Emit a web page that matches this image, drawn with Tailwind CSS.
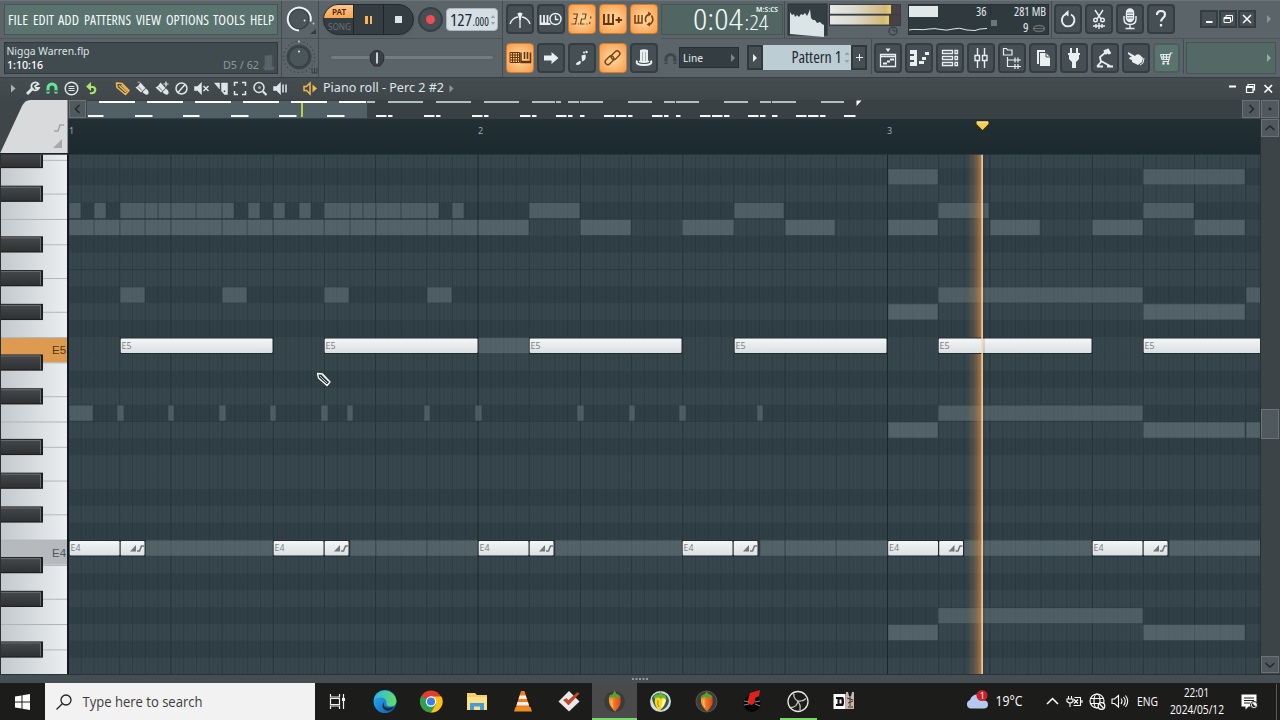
<!DOCTYPE html>
<html lang="en">

<head>
    <meta charset="utf-8" />
    <title>Piano roll - Perc 2 #2</title>
    <script src="https://cdn.jsdelivr.net/npm/@tailwindcss/browser@4"></script>
</head>

<body class="w-[1280px] h-[720px] overflow-hidden flex flex-col bg-[#42494c] font-['Noto_Sans',sans-serif] text-[#e4ecee]">

    <!-- main toolbar -->
    <header class="h-[78px] flex bg-[#5b6569] border-t border-b border-t-[#6b7478] border-b-[#353e42] shrink-0">
        <!-- menu + hint panel -->
        <div class="w-[282px] border-r border-[#434d51] flex flex-col">
            <div class="h-[38px] pl-1 pt-[3px] border-b border-[#4b5559]">
                <nav class="w-[274px] h-[31px] bg-[#5a736f] border border-[#455652]">
                    <svg class="w-[272px] h-[29px] font-['Open_Sans',sans-serif] [font-stretch:75%]" font-size="14" font-weight="500" fill="#f2faf8">
                        <text x="3" y="19.500" textLength="20" lengthAdjust="spacingAndGlyphs">FILE</text>
                        <text x="28" y="19.500" textLength="21" lengthAdjust="spacingAndGlyphs">EDIT</text>
                        <text x="53" y="19.500" textLength="21" lengthAdjust="spacingAndGlyphs">ADD</text>
                        <text x="79" y="19.500" textLength="47" lengthAdjust="spacingAndGlyphs">PATTERNS</text>
                        <text x="131" y="19.500" textLength="25" lengthAdjust="spacingAndGlyphs">VIEW</text>
                        <text x="161" y="19.500" textLength="43" lengthAdjust="spacingAndGlyphs">OPTIONS</text>
                        <text x="208" y="19.500" textLength="32" lengthAdjust="spacingAndGlyphs">TOOLS</text>
                        <text x="245" y="19.500" textLength="24" lengthAdjust="spacingAndGlyphs">HELP</text>
                    </svg>
                </nav>
            </div>
            <div class="pl-1 pt-[3px]">
                <div class="w-[274px] h-[32px] bg-[#404b4f] border border-[#2f393d]">
                    <svg class="w-[272px] h-[30px]" font-size="11" fill="#dde3e5">
                        <text x="1.500" y="11.500" textLength="83" lengthAdjust="spacingAndGlyphs">Nigga Warren.flp</text>
                        <text x="2" y="25.500" textLength="36" lengthAdjust="spacingAndGlyphs" font-weight="500" fill="#fff">1:10:16</text>
                        <text x="218" y="25.500" textLength="36" lengthAdjust="spacingAndGlyphs" fill="#8d979b">D5 / 62</text>
                        <path d="M260 13l7-1v12h3l-2 3h-8l-2-3h2zM262 14v11M265 14v11" fill="#5c686d" stroke="#505c61" />
                    </svg>
                </div>
            </div>
        </div>

        <!-- main volume and pitch knobs -->
        <div class="w-[37px] border-r border-[#434d51]">
            <svg class="w-9 h-[76px]">
                <path d="M0 37.500H36" stroke="#4b5559" />
                <circle cx="17" cy="18" r="10" fill="#4b565b" stroke="#39444a" stroke-width="1.500" />
                <path d="M17 29.500a11.500 11.500 0 1 1 11.500-9" fill="none" stroke="#eef3f4" stroke-width="2" />
                <circle cx="22.500" cy="19.500" r=".9" fill="#e7eef0" /><circle cx="31.500" cy="22.500" r=".9" fill="#c3cbce" />
                <path d="M34 28v5h-6z" fill="#333c40" />
                <circle cx="17" cy="56" r="15.500" fill="none" stroke="#39444a" stroke-width="1.500" stroke-dasharray="1 3.060" />
                <circle cx="17" cy="56" r="12.500" fill="#3b464b" />
                <circle cx="17" cy="56" r="10" fill="#4b565b" stroke="#333e43" />
                <circle cx="17" cy="50.500" r="1" fill="#e7eef0" /><circle cx="17" cy="40.500" r="1" fill="#c3cbce" />
                <path d="M30 67v5h5v-5M32.500 67v5" fill="none" stroke="#333c40" />
            </svg>
        </div>

        <!-- transport -->
        <div class="w-[184px] border-r border-[#434d51] flex flex-col">
            <div class="h-[38px] flex items-center pl-1 border-b border-[#4b5559]">
                <div class="w-[91px] h-[31px] rounded-full bg-[#343d42] border border-[#232b2f] flex overflow-hidden shadow-sm">
                    <div class="w-[30px] flex flex-col border-r border-[#1d2529]">
                        <div class="h-[13px] bg-gradient-to-b from-[#ffc58a] to-[#f9a452]">
                            <svg class="w-[30px] h-[13px]"><text x="8" y="10" font-size="9" textLength="14" lengthAdjust="spacingAndGlyphs" font-weight="600" fill="#3d2405">PAT</text></svg>
                        </div>
                        <div class="h-[16px]">
                            <svg class="w-[30px] h-4"><text x="4" y="11.500" font-size="9" textLength="23" lengthAdjust="spacingAndGlyphs" fill="#697175">SONG</text></svg>
                        </div>
                    </div>
                    <div class="w-[30px] flex items-center justify-center gap-[2px] border-r border-[#1d2529]">
                        <i class="w-[2.5px] h-[8px] bg-[#fdb25c]"></i><i class="w-[2.5px] h-[8px] bg-[#fdb25c]"></i>
                    </div>
                    <div class="w-[28px] flex items-center justify-center"><i class="w-[7px] h-[7px] bg-[#dbe4e7]"></i></div>
                </div>
                <div class="ml-1 w-[25px] h-[25px] rounded-full bg-[#454f54] border-2 border-[#363f43] flex items-center justify-center">
                    <i class="w-[9px] h-[9px] rounded-full bg-[#ef4d55]"></i>
                </div>
                <div class="ml-[3px] w-[52px] h-[23px] rounded bg-[#d3dfe4] border border-[#aab7bc]">
                    <svg class="w-[50px] h-[21px] font-['Open_Sans',sans-serif] [font-stretch:75%]" fill="#1e2a30">
                        <text x="3" y="16.500" font-size="17" textLength="22" lengthAdjust="spacingAndGlyphs">127</text>
                        <text x="25.500" y="16.500" font-size="12" textLength="16.500" lengthAdjust="spacingAndGlyphs">.000</text>
                        <path d="M44 9l2-3 2 3zM44 13l2 3 2-3z" fill="#93a2a9" />
                    </svg>
                </div>
            </div>
            <svg class="w-[182px] h-[37px]">
                <rect x="12" y="16.500" width="162" height="4" fill="#727d81" stroke="#4e585c" stroke-width=".6" />
                <path d="M51 18.500a7 7 0 0 1 14 0q0 5-4 8.500h-6q-4-3.500-4-8.500z" fill="#39424a" stroke="#262e34" />
                <path d="M52.500 20a5.500 5.500 0 0 0 11 0l-3 6h-5z" fill="#59393a" />
                <path d="M58 13.500v11" stroke="#f4f6f7" stroke-width="1.600" />
            </svg>
        </div>

        <!-- recording options -->
        <div class="w-[158px] pl-[3px] pt-[3px] grid grid-cols-[28px_28px_28px_28px_28px] grid-rows-[31px_31px] gap-y-[8px] gap-x-[3px] content-start justify-start">
            <div class="w-[28px] h-[30px] bg-[#454f54] border-2 border-[#343e42] rounded-sm"><svg viewBox="0 0 24 26" class="w-6 h-[26px]" fill="none" stroke="#eaf0f2" stroke-width="1.300"><path d="M2 18q2-6 8-7M22 18q-2-6-8-7M12 10v12" /><path d="M9.500 7.500q2.500-2 5 0l-2 6.500h-1z" fill="#eaf0f2" stroke="none" /></svg></div>
            <div class="w-[28px] h-[30px] bg-[#454f54] border-2 border-[#343e42] rounded-sm"><svg viewBox="0 0 24 26" class="w-6 h-[26px]" fill="none" stroke="#eaf0f2" stroke-width="1.400"><path d="M1.500 9v9h10M5 9v9M8.500 9v9M1.500 17.500h8" stroke-width="1.800" /><circle cx="16.500" cy="13" r="5.500" fill="#454f54" /><path d="M16.500 9.500v4h3" /></svg></div>
            <div class="w-[28px] h-[30px] bg-[radial-gradient(circle,#ffdda8,#f89a45)] border border-[#d87a28] rounded-sm"><svg viewBox="0 0 26 28" class="w-[26px] h-7" fill="none" stroke="#7a4212" stroke-width="1.200"><path d="M4 9h4.500l-1 4.500H4.500M7.500 13.500l-1 5.500H2.500M9.500 18.500v1M13 9h4l-1 5h-3.500l-1 5h4M18 18.500v1M22 11.500l-.5 2M21 17l-.5 2" /></svg></div>
            <div class="w-[28px] h-[30px] bg-[radial-gradient(circle,#ffdda8,#f89a45)] border border-[#d87a28] rounded-sm"><svg viewBox="0 0 26 28" class="w-[26px] h-7" fill="none" stroke="#673409" stroke-width="1.900"><path d="M4 9v10h9V9M8.500 9v9M15.500 15h6.500M18.800 12v6" /></svg></div>
            <div class="w-[28px] h-[30px] bg-[radial-gradient(circle,#ffdda8,#f89a45)] border border-[#d87a28] rounded-sm"><svg viewBox="0 0 26 28" class="w-[26px] h-7" fill="none" stroke="#7a4212" stroke-width="1.600"><path d="M4 10v8h7v-8M7.500 10v8M15 17q-2-5 2.500-7.500l1.500-.5M20.500 10.500q3 4.500-.5 8l-2 1" /><path d="M17 6.500l3.500 2.500-3 2.500zM19 17l-3.500 2.500 3.500 2z" fill="#7a4212" stroke="none" /></svg></div>

            <div class="w-[28px] h-[30px] bg-[radial-gradient(circle,#ffdda8,#f89a45)] border border-[#d87a28] rounded-sm"><svg viewBox="0 0 26 28" class="w-[26px] h-7" fill="none" stroke="#673409"><path d="M3 8.500h9.500v10H3zM3 11h9M3 13.500h9M3 16h9M5.500 9v10M8 9v10M10.500 9v10" /><path d="M14 8.500v10h9.500v-10M17.500 8v7M20.500 8v7M14 17.500h9" stroke-width="1.600" /></svg></div>
            <div class="w-[28px] h-[30px] bg-[#454f54] border-2 border-[#343e42] rounded-sm"><svg viewBox="0 0 24 26" class="w-6 h-[26px]" fill="#eaf0f2"><path d="M5 10.500h7.500V7l7 6-7 6v-3.500H5z" /></svg></div>
            <div class="w-[28px] h-[30px] bg-[#454f54] border-2 border-[#343e42] rounded-sm"><svg viewBox="0 0 24 26" class="w-6 h-[26px]" fill="#eaf0f2"><path d="M11.500 10.500l4-1q1 4-1.500 6l-2 1zM11 17q-.5 3-4 3-2-1 0-2.500 2-1 3-2z" /><circle cx="14" cy="7.500" r="1" /><circle cx="16.500" cy="7" r="1.200" /></svg></div>
            <div class="w-[28px] h-[30px] bg-[radial-gradient(circle,#ffdda8,#f89a45)] border border-[#d87a28] rounded-sm"><svg viewBox="0 0 26 28" class="w-[26px] h-7" fill="none" stroke="#7a4212" stroke-width="1.400"><rect x="4.500" y="13.500" width="10" height="5.500" rx="2.700" transform="rotate(-45 9.500 16.250)" /><rect x="10.500" y="8.500" width="10" height="5.500" rx="2.700" transform="rotate(-45 15.500 11.250)" /></svg></div>
            <div class="w-[28px] h-[30px] bg-[#454f54] border-2 border-[#343e42] rounded-sm"><svg viewBox="0 0 24 26" class="w-6 h-[26px]" fill="#eaf0f2"><path d="M8 5q4-1.500 8 0v10l1.500 2q-5.500 2-11 0L8 15z" /><path d="M5 15.500q-2 4.500 7 4.500t7-4.500" fill="none" stroke="#eaf0f2" stroke-width="1.800" /><path d="M10.500 7v9M13.500 7v9" stroke="#9aa5a9" stroke-width=".8" /></svg></div>
        </div>

        <!-- time, snap, pattern selector and meters -->
        <div class="w-[244px] flex flex-col">
            <div class="h-[38px] border-b border-[#4b5559] flex">
                <div class="w-[124px] pt-[3px] border-r border-[#434d51]">
                    <div class="w-[122px] h-[31px] bg-[#516662] border border-[#455652]">
                        <svg class="w-[120px] h-[29px] font-['Open_Sans',sans-serif] [font-stretch:75%]" fill="#f0f8f6">
                            <text x="31" y="25" font-size="29" font-weight="300" textLength="50" lengthAdjust="spacingAndGlyphs">0:04</text>
                            <text x="82.500" y="25" font-size="20" font-weight="300" textLength="24" lengthAdjust="spacingAndGlyphs">:24</text>
                            <text x="94" y="7" font-size="7" font-weight="600" textLength="22" lengthAdjust="spacingAndGlyphs">M:S:CS</text>
                        </svg>
                    </div>
                </div>
                <svg class="w-[120px] h-[37px]">
                    <rect x="3" y="3" width="39" height="31" fill="#343e43" stroke="#2a3337" />
                    <path d="M5 33V11l2 3 2-1 1 3 2-2 2 2 2-3 2 1 2-2 2 3 2-4 1-3 1 9 2 2 2 0 2 3 3-1 2 2 2 1v12z" fill="#dbe4e7" />
                    <defs><linearGradient id="vu"><stop offset="0" stop-color="#e3e7e8" /><stop offset=".4" stop-color="#dcdacf" /><stop offset=".9" stop-color="#d3b878" /><stop offset="1" stop-color="#e5cf6d" /></linearGradient></defs>
                    <rect x="44.500" y="3.500" width="71" height="21" fill="#4a4143" stroke="#343e43" />
                    <rect x="45" y="4" width="61" height="9" fill="url(#vu)" /><rect x="45" y="14.500" width="59" height="9" fill="url(#vu)" />
                    <path d="M45 13.500h70" stroke="#343e43" stroke-width="1.500" />
                    <circle cx="108" cy="30" r="4" fill="none" stroke="#394449" stroke-width="1.500" /><path d="M108 27v3h3" stroke="#394449" fill="none" />
                </svg>
            </div>
            <div class="h-[37px] flex items-center">
                <svg class="w-[18px] h-9"><path d="M5 24v-5a4.500 4.500 0 0 1 9 0v5" fill="none" stroke="#3d474b" stroke-width="3" /><path d="M3.500 22h3M12.500 22h3" stroke="#59636a" /></svg>
                <div class="w-[60px] h-[21px] bg-[#343e42] border border-[#262f33] flex items-center justify-between px-[3px]">
                    <svg class="w-6 h-4"><text x="0" y="12" font-size="11.500" fill="#e4ecee" textLength="20" lengthAdjust="spacingAndGlyphs">Line</text></svg>
                    <svg class="w-1 h-2" fill="#7b868a"><path d="M0 0l4 4-4 4z" /></svg>
                </div>
                <div class="ml-2 w-4 h-[25px] bg-[#454f54] border-2 border-[#2f383c] flex items-center justify-center"><svg class="w-[5px] h-2" fill="#eaf0f2"><path d="M0 0l4 4-4 4z" /></svg></div>
                <div class="w-[88px] h-[25px] bg-[#bdcdd4]">
                    <svg class="w-[88px] h-[25px] font-['Open_Sans',sans-serif] [font-stretch:75%]"><text x="28.500" y="18" font-size="16" fill="#1d2a31" textLength="50" lengthAdjust="spacingAndGlyphs">Pattern 1</text><path d="M81.500 10l2.500-3 2.500 3zM81.500 15l2.500 3 2.500-3z" fill="#93a2a9" /></svg>
                </div>
                <div class="w-4 h-[25px] bg-[#454f54] border-2 border-[#2f383c] flex items-center justify-center"><svg class="w-[7px] h-[7px]" stroke="#eaf0f2"><path d="M3.500 0v7M0 3.500h7" /></svg></div>
            </div>
        </div>

        <!-- cpu panel and window shortcuts -->
        <div class="flex-1 flex flex-col">
            <div class="h-[38px] border-b border-[#4b5559] flex">
                <svg class="w-[147px] h-[37px] border-r border-[#434d51] font-['Open_Sans',sans-serif] [font-stretch:75%]" fill="#e4ecee" font-size="12">
                    <rect x="3.500" y="3.500" width="140" height="30" fill="#2f3a3f" stroke="#273135" />
                    <rect x="4" y="5" width="29" height="11" fill="#e1e8ea" />
                    <text x="71" y="15" textLength="10.500" lengthAdjust="spacingAndGlyphs">36</text>
                    <text x="109" y="15" textLength="32" lengthAdjust="spacingAndGlyphs">281 MB</text>
                    <text x="118" y="31" textLength="5.500" lengthAdjust="spacingAndGlyphs">9</text>
                    <path d="M4 29q4-1 9-.5t11-.5 12 .5 12-.5 14 1l8 .5 5-1.500 7-.5" fill="none" stroke="#e1e8ea" />
                    <path d="M85.500 4v12" stroke="#252e32" /><rect x="86" y="19" width="6" height="6" fill="#6b767a" />
                    <ellipse cx="134" cy="27.500" rx="5.500" ry="3" fill="none" stroke="#65716f" stroke-width="1.500" /><path d="M129 27.500h10" stroke="#65716f" />
                </svg>
                <div class="flex gap-[3px] pt-[3px] pl-[2px]">
                    <div class="w-[28px] h-[30px] bg-[#454f54] border-2 border-[#343e42] rounded-sm"><svg viewBox="0 0 24 26" class="w-6 h-[26px]" fill="none" stroke="#eaf0f2" stroke-width="1.900"><path d="M15 8.500a6.300 6.300 0 1 1-5-.3" /><path d="M12.500 4v6.500l-4-3z" fill="#eaf0f2" stroke="none" /></svg></div>
                    <div class="w-[28px] h-[30px] bg-[#454f54] border-2 border-[#343e42] rounded-sm"><svg viewBox="0 0 24 26" class="w-6 h-[26px]" fill="none" stroke="#eaf0f2" stroke-width="1.400"><path d="M8 4l6 9M16 4l-6 9" /><circle cx="8.500" cy="14" r="1.800" /><circle cx="15.500" cy="14" r="1.800" /><path d="M6 20h12M9 18v4M12 17v6M15 18v4" /></svg></div>
                    <div class="w-[28px] h-[30px] bg-[#454f54] border-2 border-[#343e42] rounded-sm"><svg viewBox="0 0 24 26" class="w-6 h-[26px]" fill="none" stroke="#eaf0f2" stroke-width="1.400"><rect x="8.500" y="3" width="7" height="12.500" rx="3.500" fill="#eaf0f2" /><path d="M6 10v3q0 5.500 6 5.500t6-5.500v-3M12 18v4M7.500 22.500h9" /><path d="M9 7h6M9 9.500h6M9 12h6" stroke="#566166" stroke-width=".8" /></svg></div>
                    <div class="w-[28px] h-[30px] bg-[#454f54] border-2 border-[#343e42] rounded-sm"><svg viewBox="0 0 24 26" class="w-6 h-[26px]" fill="none" stroke="#eaf0f2" stroke-width="2.200"><path d="M8 9q0-4 4-4t4 3.500c0 3.500-4 3.500-4 7M12 18v2.500" /></svg></div>
                </div>
                <div class="ml-[25px] mt-[9px] flex gap-[1px]">
                    <div class="w-[18px] h-[18px] border-2 border-[#343e42] bg-[#454f54]"><svg viewBox="0 0 14 14" class="w-[14px] h-[14px]"><path d="M4 10h6.500" stroke="#fff" stroke-width="2" /></svg></div>
                    <div class="w-[18px] h-[18px] border-2 border-[#343e42] bg-[#454f54]"><svg viewBox="0 0 14 14" class="w-[14px] h-[14px]" fill="none" stroke="#fff"><path d="M5 5V3.500h6.500V9H10M3 5.500h6.500v5H3zM3 6.500h6" /></svg></div>
                    <div class="w-[18px] h-[18px] border-2 border-[#343e42] bg-[#454f54]"><svg viewBox="0 0 14 14" class="w-[14px] h-[14px]"><path d="M3 3l8 8M11 3l-8 8" stroke="#fff" stroke-width="1.500" /></svg></div>
                </div>
                <svg class="ml-[11px] mt-[14px] w-1 h-2" fill="#8b9699"><path d="M0 0l4 4-4 4z" /></svg>
            </div>
            <div class="flex border-l border-[#434d51] -ml-[34px] w-[409px] pl-[2px]">
                <div class="w-[309px] flex gap-[3px] pt-1">
                    <div class="w-[28px] h-[30px] bg-[#454f54] border-2 border-[#343e42] rounded-sm"><svg viewBox="0 0 24 26" class="w-6 h-[26px]" fill="none" stroke="#eaf0f2" stroke-width="1.300"><path d="M4.500 9.500h15v12h-15zM4.500 11.500h15" /><path d="M7 18.500h4M11 16.500h3M14 14.500h4" stroke-width="2" /><path d="M9.500 3.500h5L12 7z" fill="#eaf0f2" stroke="none" /></svg></div>
                    <div class="w-[28px] h-[30px] bg-[#454f54] border-2 border-[#343e42] rounded-sm"><svg viewBox="0 0 24 26" class="w-6 h-[26px]" fill="#eaf0f2"><path d="M3 5h7v16H3v-4h4v-2H3v-4h4V9H3zM12 16h5v3h-5zM15 12h4v3h-4zM18 7h4v3h-4z" /></svg></div>
                    <div class="w-[28px] h-[30px] bg-[#454f54] border-2 border-[#343e42] rounded-sm"><svg viewBox="0 0 24 26" class="w-6 h-[26px]" fill="none" stroke="#eaf0f2" stroke-width="1.300"><path d="M4.500 5.500h10v3h-10zM4.500 11.500h10v3h-10zM4.500 17.500h10v3h-10zM17 5.500h2.500v3H17zM17 11.500h2.500v3H17zM17 17.500h2.500v3H17z" /></svg></div>
                    <div class="w-[28px] h-[30px] bg-[#454f54] border-2 border-[#343e42] rounded-sm"><svg viewBox="0 0 24 26" class="w-6 h-[26px]" fill="none" stroke="#eaf0f2" stroke-width="1.400"><path d="M8.500 3v7M8.500 16v7M15.500 3v7M15.500 16v7M6 10.500h4.500v5H6zM13.500 10.500H18v5h-4.500z" /></svg></div>
                    <div class="w-[28px] h-[30px] bg-[#454f54] border-2 border-[#343e42] rounded-sm"><svg viewBox="0 0 24 26" class="w-6 h-[26px]" fill="none" stroke="#eaf0f2" stroke-width="1.200"><path d="M3.500 3.500h3l1 1.500H12v5H3.500zM7.500 12v9.500H13M7.500 15H13M13 15h8M13 21.500h8M15 12.500v5M18 12.500v5M15 19v5M18 19v5" /></svg></div>
                    <div class="w-[28px] h-[30px] bg-[#454f54] border-2 border-[#343e42] rounded-sm"><svg viewBox="0 0 24 26" class="w-6 h-[26px]" fill="#eaf0f2"><path d="M6 5h8v2H8v12H6z" /><path d="M9 8h6l4 4v9H9z" /><path d="M15 8v4h4" fill="none" stroke="#454f54" /></svg></div>
                    <div class="w-[28px] h-[30px] bg-[#454f54] border-2 border-[#343e42] rounded-sm"><svg viewBox="0 0 24 26" class="w-6 h-[26px]" fill="#eaf0f2"><path d="M8 3h2v5h4V3h2v5h2v2h-1v4l-3 3v6h-4v-6l-3-3v-4H6V8h2z" /></svg></div>
                    <div class="w-[28px] h-[30px] bg-[#454f54] border-2 border-[#343e42] rounded-sm"><svg viewBox="0 0 24 26" class="w-6 h-[26px]" fill="none" stroke="#eaf0f2" stroke-width="1.800"><path d="M13 7l-6 5 1 5-4 4.500M8 16l10 5.500M4 21.500h6M14 21.500h6" /><path d="M11.500 5l2.500 4M14 4l3 5" stroke-width="3" /></svg></div>
                    <div class="w-[28px] h-[30px] bg-[#454f54] border-2 border-[#343e42] rounded-sm"><svg viewBox="0 0 24 26" class="w-6 h-[26px]" fill="#eaf0f2"><path d="M4 7l7 4q2-3 5-1l3 3-1 4-4 3-6-3v-2l-3-1 1-2 2 0-4-3z" /><path d="M20 13l-1 5-3 2" fill="none" stroke="#eaf0f2" /></svg></div>
                    <div class="w-[27px] h-[30px] bg-[#5b736f] border-2 border-[#4b5f5c] rounded-sm"><svg viewBox="0 0 24 26" class="w-6 h-[26px]" fill="none" stroke="#e4ecee" stroke-width="1.200"><path d="M17.500 8h-2l-2 8.500H7.500M5.500 9.500h9.500M5.500 9.500l1.500 5H14M6.300 12.200H14.500M8.500 10v4M11.500 10v4" /><circle cx="8.500" cy="18.500" r=".7" /><circle cx="13" cy="18.500" r=".7" /></svg></div>
                </div>
                <div class="border-l border-[#434d51] pl-[2px] pt-[3px]">
                    <div class="w-[90px] h-[32px] bg-[#546966] border border-[#455652] flex items-center justify-end pr-1"><svg class="w-1 h-2" fill="#9aa8a7"><path d="M0 0l4 4-4 4z" /></svg></div>
                </div>
            </div>
        </div>
    </header>

    <!-- piano roll caption bar -->
    <section class="h-[22px] bg-gradient-to-b from-[#464d51] to-[#40474a] shrink-0 flex items-center justify-between">
        <svg class="w-[470px] h-[22px]" fill="none" stroke="#dfe6e8" stroke-width="1.500">
            <path d="M11 6.500l4.500 4-4.500 4z" fill="#a9b2b5" stroke="none" />
            <path d="M27 16l6-6" stroke-width="3" /><path d="M38.500 6a4 4 0 1 0 .5 4l-3 0-1-2z" stroke-width="1.800" />
            <path d="M48 15.500V10a4 4 0 0 1 8 0v5.500" stroke="#5fe89a" stroke-width="3" /><path d="M46.500 13h3M54.500 13h3" stroke="#40474a" />
            <circle cx="71.500" cy="10.500" r="6.300" /><path d="M68.500 8.500h6M68.500 10.500h6M68.500 12.500h6" stroke-width="1.100" />
            <path d="M89 9h4q3 1 2 4t-5 2" stroke="#a5e868" stroke-width="2.200" /><path d="M91 4v9l-5-4.500z" fill="#a5e868" stroke="none" />
            <path d="M116.500 5l5.500.5 7 7-3.500 4-8.500-7z" stroke="#efb94b" stroke-width="1.600" stroke-linejoin="round" /><path d="M119 7.500l7 6.500M121.500 7l6 6" stroke="#efb94b" />
            <g fill="#dfe6e8" stroke="none">
                <path id="brush" d="M135.500 9.500q3-1 5-5l5 5.500-4.500 4.500zM142.500 14l3.500-3.500 2 2q1.500 3-.5 4-2 .5-3.500-1z" />
                <path d="M137 4.500l2-1 1.500 1M155.500 9.500q3-1 5-5l5 5.500-4.500 4.500zM162.500 14l3.500-3.500 2 2q1.500 3-.5 4-2 .5-3.500-1z" />
            </g>
            <path d="M166 3.500v5M163.500 6h5" stroke-width="1.200" />
            <path d="M138.500 9l3.500 3.500M158.500 9l3.500 3.500" stroke="#4a5255" stroke-width=".8" />
            <circle cx="181.500" cy="10.500" r="5.500" /><path d="M178 14.500l7-8" />
            <path d="M194.500 8.500h3l4-4v12l-4-4h-3z" fill="#dfe6e8" stroke-width=".5" /><path d="M203.500 8l5 5M208.500 8l-5 5" />
            <path d="M214.500 5h5v6z" fill="#dfe6e8" stroke-width=".5" /><path d="M221.500 5h6v11.500h-3l-3-3.500z" fill="#dfe6e8" stroke-width=".5" /><path d="M224.500 12.500v1.500" stroke="#40474a" />
            <path d="M234.500 8V4.500h3.500M242 4.500h3.500V8M245.500 13v3.500H242M238 16.500h-3.500V13" />
            <circle cx="259" cy="9.500" r="5" /><path d="M263 13.500l3.500 3.500" stroke-width="2.200" /><circle cx="259.500" cy="9.500" r="1.500" fill="#9ca5a8" stroke="none" />
            <path d="M273.500 8.500h3l4-4v12l-4-4h-3z" fill="#dfe6e8" stroke-width=".5" /><path d="M283 6.500v8M286 6.500v8" />
            <path d="M304 8.500h2.500l3.500-3.500v11l-3.500-3.500H304z" stroke="#efb94b" /><path d="M312.500 6.500l4.500 4-4.500 4z" fill="#efb94b" stroke="none" />
            <text x="323" y="13.500" font-size="12" fill="#dfe6e8" stroke="none" textLength="121" lengthAdjust="spacingAndGlyphs">Piano roll - Perc 2 #2</text>
            <path d="M449.500 7l4 3.500-4 4z" fill="#8b9699" stroke="none" />
        </svg>
        <svg class="w-[56px] h-[22px]" fill="none" stroke="#fff" stroke-width="1.200"><path d="M5 8.500h7" stroke-width="2" /><path d="M24 9V6.500h6.500V12H29M22.500 8.500h6.500v6h-6.500zM22.500 9.500h6" /><path d="M40.500 7l7.500 7.500M48 7l-7.500 7.500" stroke-width="1.600" /></svg>
    </section>

    <!-- overview strip, ruler, keyboard and note grid -->
    <svg id="roll" class="w-[1280px] h-[583px] shrink-0" viewBox="0 100 1280 583"></svg>

    <!-- taskbar -->
    <footer class="h-[37px] bg-[#1c1c1b] shrink-0 flex text-white">
        <div class="w-[45px] flex items-center justify-center"><svg class="w-4 h-4" fill="#fff"><path d="M0 2.500l6.500-1v6H0zM7.500 1.300L15 0v7.500H7.500zM0 8.500h6.500v6l-6.500-1zM7.500 8.500H15V16l-7.500-1.300z" /></svg></div>
        <div class="w-[270px] bg-[#f2f2f2] flex items-center pl-[11px]">
            <svg class="w-4 h-4" fill="none" stroke="#222" stroke-width="1.300"><circle cx="10" cy="6" r="5" /><path d="M6.500 9.500L.5 15.500" /></svg>
            <svg class="ml-[10px] w-[140px] h-6"><text x=".5" y="17" font-size="14" fill="#3c3c3c" textLength="120" lengthAdjust="spacingAndGlyphs" class="font-['Open_Sans',sans-serif]">Type here to search</text></svg>
        </div>
        <svg id="apps" class="w-[645px] h-[37px]" viewBox="315 683 645 37">
            <g fill="none" stroke="#f2f2f2" stroke-width="1.200"><path d="M330.500 694v3h9v-3M330.500 709v-3h9v3M330.500 698.500h9v6h-9zM343.500 694v15" /><path d="M343.500 698v3" stroke-width="3" /></g>
            <defs>
                <linearGradient id="edge" x1="0" y1="0" x2="1" y2="1"><stop offset="0" stop-color="#2fb5e8" /><stop offset=".4" stop-color="#1f8fdc" /><stop offset="1" stop-color="#0f57a8" /></linearGradient>
                <linearGradient id="edge2"><stop offset="0" stop-color="#2cb9e6" /><stop offset="1" stop-color="#65dd62" /></linearGradient>
                <linearGradient id="mango"><stop offset="0" stop-color="#f9a838" /><stop offset=".5" stop-color="#f0701f" /><stop offset="1" stop-color="#d8481c" /></linearGradient>
            </defs>
            <circle cx="385" cy="701.500" r="11.500" fill="url(#edge)" />
            <path d="M374 699a11.500 11.500 0 0 1 22.500 2q0 5-6 5.500-5 0-4-4.500-1-5-7-4.500-3.500.2-5.500 1.500z" fill="url(#edge2)" />
            <path d="M384 702q-2 8 10 5-3 4.500-8 3.500-6-2.500-2-8.500z" fill="#1c2b44" />
            <circle cx="431" cy="701.500" r="11" fill="#e13c30" /><path d="M431 701.500L421.500 696a11 11 0 0 0 9.500 16.500l5-8z" fill="#2ca24c" /><path d="M431 696.500h10.500A11 11 0 0 1 431 712.500l5-8.500z" fill="#fbc116" />
            <circle cx="431" cy="701.500" r="5.200" fill="#fff" /><circle cx="431" cy="701.500" r="4" fill="#3c7de6" />
            <path d="M467 693h8l2 2h10v15h-20z" fill="#f5cf62" /><path d="M467 697h20v13h-20z" fill="#fbe08a" /><path d="M470 710v-7h14v7h-4v-3.500h-6v3.500z" fill="#4a9bd4" />
            <path d="M521 691h3.500l5 16h-13.500z" fill="#f07c1c" /><path d="M519.700 695.500h6l1.200 3.500h-8.400zM517.500 702h10.500l1 3.500h-12.500z" fill="#f5f0ea" /><path d="M515.500 707h15l1.500 4.500h-18z" fill="#ee8a24" />
            <path d="M569 691l10.500 10.500L569 711.500 558.500 701.500z" fill="#e9e7ee" /><path d="M563.500 700l5 5 11-11.500-2.500-1-8.500 8-2-2z" fill="#c44a20" stroke="#8f3212" stroke-width=".5" />
            <rect x="592" y="683" width="45" height="37" fill="#4a4a4a" /><rect x="592" y="718" width="45" height="2" fill="#78d867" />
            <circle cx="614.500" cy="701.500" r="10.500" fill="#3c3b3b" /><path d="M609 699q0-3 5.500-3t6 3q1.500 6-5.500 12.500-7-6-6-12.500z" fill="url(#mango)" /><path d="M608.500 698.500q1-4.500 4-4l2-4 2 3.500q4 .5 4 4.500l-3-1.500-2 1.500-2.500-1.500z" fill="#5d9f32" />
            <path d="M612 700q-1 4 1 7" stroke="#fbc77c" stroke-width="1.200" fill="none" />
            <circle cx="660.500" cy="701.500" r="10.500" fill="#cfdde2" /><path d="M652 698a9 9 0 0 1 17 3q-1 7-8 9.500-8-3-9-12.500z" fill="#355a48" /><path d="M655 698.500q0-3 5-3t6 3q.5 6-6.500 12.500-6-6-4.500-12.500z" fill="#f7d825" /><path d="M653.500 698.500q1-5 5.500-4l1.500-4 2 4q4 0 4 5l-3.500-2-2 1.500-2.500-1.500z" fill="#6ab533" />
            <path d="M663 699l3 1-3 7-2 1z" fill="#fff7c0" /><path d="M658 700q-1 4 1 7" stroke="#c98f12" stroke-width="1.200" fill="none" />
            <circle cx="706.500" cy="701.500" r="10.500" fill="#3e3d3c" stroke="#5a5958" /><path d="M701 699q0-3 5.500-3t6 3q1.500 6-5.500 12.500-7-6-6-12.500z" fill="url(#mango)" /><path d="M700.500 698.500q1-4.500 4-4l2-3 2 2.500q4 .5 4 4.500l-3-1.500-2 1.500-2.500-1.500z" fill="#5d9f32" />
            <path d="M704 700q-1 4 1 7" stroke="#fbc77c" stroke-width="1.200" fill="none" />
            <circle cx="752" cy="703.500" r="8.500" fill="#070707" /><path d="M750 693l10-3-1 6-4 2q1 6-4 7-4-1-3-5z" fill="#e0201c" /><path d="M744 701l5 1M744 705l5-1M755 702l5-1M755 704l5 2" stroke="#888" />
            <g fill="none" stroke="#e6e6e6" stroke-width="1.300"><circle cx="798" cy="701.500" r="10" /><path d="M794 693.500q-1 5 4 7.500 5 1 8-2.500M798 701q-1 6-7 6.500M797 701q4 3 3 9" stroke="#bdbdbd" /></g>
            <rect x="780" y="718" width="37" height="2" fill="#78d867" />
            <rect x="833.500" y="694" width="12" height="15" fill="#fff" /><path d="M836 697h6.500q1.500 0 1.500 4.500t-1.500 4.500H836v-2h1.500v-5H836z" fill="#111" /><path d="M839.500 699.500h2v4h-2z" fill="#fff" /><path d="M846 692h2l1 4h2l1-4h2v17h-9z" fill="#c7b3b0" /><path d="M847 698l6 2M848 703l5-2M848 707l5 0M850 696v10" stroke="#43302e" />
        </svg>
        <svg class="w-[320px] h-[37px] font-['Open_Sans',sans-serif]" viewBox="960 683 320 37" fill="#fff">
            <path d="M970 708.500a4.500 4.500 0 0 1 0-8.500q2-6 8-5.500 5 1 6 6a4 4 0 0 1 0 8z" fill="#b5c9ee" /><circle cx="982" cy="695.500" r="5.500" fill="#c9202c" />
            <text x="979.700" y="699" font-size="9">1</text>
            <text x="995.500" y="706" font-size="14" textLength="27" lengthAdjust="spacingAndGlyphs">19°C</text>
            <g fill="none" stroke="#fff" stroke-width="1.200">
                <path d="M1047 704l5.500-5.500 5.500 5.500" stroke-width="1.500" />
                <path d="M1068.500 696v3M1071.500 696v3M1067 699h6v2.500q-3 3-6 0zM1070 703v4M1074.500 697.500h6v8h-7M1082 700v3M1074 699.500l4 4M1078 699.500l-4 4" stroke-width="1.100" />
                <circle cx="1097" cy="701" r="7" /><ellipse cx="1097" cy="701" rx="3" ry="7" /><path d="M1090 698.500h14M1090 703.500h10" /><circle cx="1101.500" cy="706" r="3.300" fill="#1c1c1b" /><path d="M1099.500 704l4 4" />
                <path d="M1112 699h2.500l4-3.500v11.500l-4-3.500h-2.500zM1121 698.500q2 2.500 0 5.500M1123.500 697q3.500 4 0 8.500M1125.500 695.500q4.500 5.500 0 11.500" stroke-width="1.100" />
            </g>
            <text x="1137" y="706" font-size="12.500" textLength="21" lengthAdjust="spacingAndGlyphs">ENG</text>
            <text x="1184" y="697" font-size="12" textLength="25" lengthAdjust="spacingAndGlyphs">22:01</text>
            <text x="1170" y="714" font-size="12" textLength="54" lengthAdjust="spacingAndGlyphs">2024/05/12</text>
            <path d="M1241.500 694.500h15v12h-8l-3 3v-3h-4z" /><path d="M1244 698h10M1244 700.500h10M1244 703h6" stroke="#1c1c1b" stroke-width="1.200" /><circle cx="1254" cy="705" r="3.500" stroke="#1c1c1b" /><path d="M1253 703a2.200 2.200 0 1 0 3 3q-2.500 0-3-3z" fill="#1c1c1b" />
            <path d="M1276.500 684v36" stroke="#5a5a5a" />
        </svg>
    </footer>

    <script>
        // Grid geometry: E5 row starts at E5_TOP, one bar is BAR px wide
        var ROW = 16.88, E5_TOP = 337.1, BAR = 409.5, LEFT = 68.5, RIGHT = 1260.5, TOP = 154.5, BOTTOM = 674;
        var LIGHT = [4, 3, 1, 11, 9, 8, 6];
        var BLACK = [1, 3, 6, 8, 10];

        function rowY(p) { return E5_TOP + (64 - p) * ROW; }
        function rect(x, y, w, h, fill, extra) {
            return '<rect x="' + x + '" y="' + y + '" width="' + w + '" height="' + h + '" fill="' + fill + '" ' + (extra || '') + '/>';
        }
        function line(x1, y1, x2, y2, c) {
            return '<path d="M' + x1 + ' ' + y1 + 'L' + x2 + ' ' + y2 + '" stroke="' + c + '"/>';
        }

        // Ghost notes from the other channels: pitch -> [start, end]
        var ghosts = {
            74: [[888, 938], [1143, 1245]],
            72: [[69, 81], [94, 106], [120, 145], [145, 158], [158, 171], [171, 196], [196, 222], [222, 234], [248, 260], [273, 285], [299, 311], [324, 350], [350, 363], [363, 376], [376, 401], [401, 427], [427, 439], [452, 464], [529, 580], [734, 784], [938, 989], [1143, 1194]],
            71: [[69, 94], [94, 120], [120, 145], [145, 171], [171, 222], [222, 247], [247, 273], [273, 324], [324, 350], [350, 376], [376, 427], [427, 452], [452, 478], [478, 529], [580, 631], [682, 734], [785, 835], [888, 938], [990, 1040], [1092, 1143], [1194, 1245]],
            67: [[120, 145], [222, 247], [324, 349], [427, 452], [938, 1143], [1246, 1261]],
            66: [[888, 938], [1143, 1245]],
            64: [[478, 529]],
            60: [[69, 93], [117, 124], [168, 174], [219, 226], [270, 276], [321, 328], [347, 353], [424, 430], [475, 482], [577, 584], [629, 635], [679, 686], [757, 763], [938, 1143]],
            59: [[888, 938], [1143, 1245], [1246, 1261]],
            52: [[145, 273], [350, 376], [376, 427], [427, 478], [555, 682], [760, 785], [785, 836], [836, 888], [964, 1092], [1169, 1261]],
            48: [[938, 1143]],
            47: [[888, 938], [1143, 1245]]
        };
        var e5 = [[120, 273], [324, 478], [529, 682], [734, 887], [938, 1092], [1143, 1261]];
        var e4 = [69, 273, 478, 682, 887.5, 1092];

        // Overview dashes
        var mapTop = [[99, 135], [147, 183], [195, 231], [243, 279], [291, 327], [339, 366], [367, 375], [388, 423], [436, 471], [484, 519], [532, 555], [556, 561], [568, 579], [580, 603], [628, 652], [664, 675], [676, 699], [724, 748], [760, 771], [772, 796], [821, 844]];
        var mapLow = [[88, 104], [135, 153], [183, 200], [231, 249], [279, 297], [327, 345], [376, 387], [388, 393], [424, 435], [436, 441], [472, 483], [484, 489], [520, 531], [532, 537], [556, 567], [568, 573], [580, 585], [604, 615], [616, 627], [628, 633], [652, 663], [664, 669], [676, 681], [700, 711], [712, 723], [724, 730], [748, 759], [760, 766], [772, 778], [796, 807], [808, 819], [820, 826], [844, 856]];

        var s = '<defs>'
            + '<linearGradient id="key"><stop offset="0" stop-color="#c3c8cc"/><stop offset=".65" stop-color="#dde1e4"/><stop offset="1" stop-color="#eceff1"/></linearGradient>'
            + '<linearGradient id="bk" x2="0" y2="1"><stop offset="0" stop-color="#45484a"/><stop offset="1" stop-color="#2f3133"/></linearGradient>'
            + '<linearGradient id="note" x2="0" y2="1"><stop offset="0" stop-color="#f4f6f7"/><stop offset="1" stop-color="#dbe0e2"/></linearGradient>'
            + '<linearGradient id="ruler" x2="0" y2="1"><stop offset="0" stop-color="#223036"/><stop offset="1" stop-color="#1c292e"/></linearGradient>'
            + '<linearGradient id="glow"><stop offset="0" stop-color="#d08a48" stop-opacity="0"/><stop offset=".5" stop-color="#d08a48" stop-opacity=".25"/><stop offset="1" stop-color="#d98d46" stop-opacity=".75"/></linearGradient>'
            + '<clipPath id="clip"><rect x="0" y="154.500" width="1260.500" height="519.500"/></clipPath></defs>';

        s += rect(0, 100, 1280, 583, '#3e4649');
        s += rect(87, 100, 1156, 19, '#3a4144') + rect(87, 101, 280, 17, '#516067');
        mapTop.forEach(function (d) { s += rect(d[0], 101, d[1] - d[0], 2, d[0] < 366 ? '#fff' : '#b4bfc2'); });
        mapLow.forEach(function (d) { s += rect(d[0], 115, d[1] - d[0] - .5, 2, '#f4f7f8'); });
        s += rect(301, 103, 2, 14, '#b9cf4a');
        s += '<path d="M856.500 106V100.500h5z" fill="#fff"/>';

        // Ruler
        s += rect(68, 119, 1192.5, 36, 'url(#ruler)');
        s += '<g font-size="9" fill="#9eaaaf"><text x="69" y="134">1</text><text x="478" y="134">2</text><text x="887" y="134">3</text></g>';

        // Rows and gridlines
        s += '<g clip-path="url(#clip)">';
        for (var p = 75; p >= 44; p--) {
            s += rect(LEFT, rowY(p), RIGHT - LEFT, ROW, LIGHT.indexOf(p % 12) >= 0 ? '#37464d' : '#303f46');
        }
        [71, 59, 68].forEach(function (k) { s += line(LEFT, rowY(k), RIGHT, rowY(k), '#2d3b42'); });
        for (var i = 0; i <= 280; i++) {
            var x = (LEFT + i * BAR / 96).toFixed(1);
            if (i % 96 == 0) s += line(x, TOP, x, BOTTOM, '#1a252a');
            else if (i % 24 == 0) s += line(x, TOP, x, BOTTOM, '#243239');
            else if (i % 12 == 0) s += line(x, TOP, x, BOTTOM, '#29373e');
            else if (i % 3 == 0) s += line(x, TOP, x, BOTTOM, 'rgba(32,45,52,.4)');
            else s += line(x, TOP, x, BOTTOM, 'rgba(30,44,51,.14)');
        }
        Object.keys(ghosts).forEach(function (k) {
            ghosts[k].forEach(function (g) {
                s += rect(g[0] + .5, rowY(k) + 1, g[1] - g[0] - 1, 15, 'rgba(122,138,143,.42)', 'stroke="rgba(120,136,141,.15)" stroke-width=".6"');
            });
        });

        // Playhead glow sits below the notes
        s += rect(967, TOP, 15, BOTTOM - TOP, 'url(#glow)');

        function note(a, b, p, label) {
            s += rect(a, rowY(p) + .4, b - a + .5, 16.4, '#202c32');
            s += rect(a + .7, rowY(p) + 1.3, b - a - 1.2, 14.6, 'url(#note)', 'rx="1"');
            if (label) s += '<text x="' + (a + 1.5) + '" y="' + (rowY(p) + 11.7) + '" font-size="8.500" textLength="10" lengthAdjust="spacingAndGlyphs" fill="#7b8387">' + label + '</text>';
        }
        e5.forEach(function (n) { note(n[0], n[1], 64, 'E5'); });
        e4.forEach(function (a) {
            note(a, a + 51, 52, 'E4');
            note(a + 51, a + 76, 52);
            // slide and porta marks
            s += '<path d="M' + (a + 61) + ' 551.500h6v-6.500z" fill="#6f777b"/>';
            s += '<path d="M' + (a + 68) + ' 551h2.500l2-5h2.500" fill="none" stroke="#6f777b" stroke-width="1.600"/>';
        });

        s += rect(981.4, TOP, 1.5, BOTTOM - TOP, '#ffd3a0');
        s += line(984, TOP, 984, BOTTOM, 'rgba(20,30,36,.25)');

        // Keyboard
        s += rect(0, 154, 67, 520, 'url(#key)');
        s += rect(0, rowY(64) + .9, 67, 24.5, '#dd9b52') + rect(0, rowY(52) + .5, 67, 24.5, '#b6b9bd');
        for (p = 75; p >= 45; p--) {
            var pc = p % 12, y = rowY(p) + .5;
            if (BLACK.indexOf(pc) >= 0) {
                s += line(42, y + ROW / 2, 67, y + ROW / 2, '#b2b8bc');
                s += rect(0, y, 43, 16.2, '#1c1e20') + rect(1, y + 1, 40, 14, 'url(#bk)') + '<path d="M1 ' + (y + 1.5) + 'H40.500V' + (y + 15) + '" fill="none" stroke="#77797b" stroke-width=".8"/>';
            }
            if (pc == 11 || pc == 4) s += line(0, y, 67, y, '#adb3b7');
        }
        s += '<g font-size="11.500" font-family="Liberation Sans, sans-serif"><text x="52" y="354" fill="#5c3509">E5</text><text x="52" y="556.500" fill="#53585b">E4</text></g>';
        s += rect(67, 154, 1.8, 520, '#10181c') + rect(0, 154, 1, 520, '#2a3034');
        s += '</g>';

        // Key preview corner
        s += '<path d="M0 153.500L22 106q3-6 8-6h37.500v53.500z" fill="#d9dadb"/><path d="M0 153.800H68" stroke="#1a2226" stroke-width="1.500"/>';
        s += '<path d="M54 131h4l2-6h4" fill="none" stroke="#a2a5a7" stroke-width="1.500"/><path d="M62 139v9h-9z" fill="#a7aaac"/>';

        // Playhead marker
        s += '<path d="M975.500 121h14v4l-7 6.500-7-6.500z" fill="#3b2c10"/><path d="M976.500 121.500h12v2.500l-6 6-6-6z" fill="#f7cf56"/><path d="M977 122h11" stroke="#fff0b8"/>';

        // Scrollbars
        function btn(x, y, w, h, d) {
            s += rect(x + .5, y + .5, w - 1, h - 1, '#50595d', 'stroke="#6a7377"') + '<path d="' + d + '" fill="none" stroke="#20282c" stroke-width="1.500"/>';
        }
        s += line(1260.5, 119, 1260.5, 674, '#273034') + rect(1261, 119, 19, 555, '#3c4447');
        btn(69, 100, 17, 18, 'M79.500 105l-4 4 4 4');
        btn(1242, 100, 18, 18, 'M1249.500 105l4 4-4 4');
        btn(1261, 100, 18, 18, 'M1268.500 109h3M1270 107.500v3');
        btn(1261, 119, 18, 18, 'M1265.500 130l4.500-4 4.500 4');
        btn(1261, 656, 18, 17, 'M1265.500 663l4.500 4 4.500-4');
        btn(1261, 409, 18, 30, 'M0 0');

        // Splitter
        s += rect(0, 674, 1280, 9, '#454e52') + line(0, 674.5, 1280, 674.5, '#2a3337');
        for (i = 0; i < 5; i++) s += rect(632 + i * 3.5, 678, 2, 2, '#8f999d');

        // Pencil cursor
        s += '<path d="M317.500 373.500l5 .5 7.500 8-3 3.500-8.500-7.500z" fill="#2c3a41" stroke="#fff" stroke-width="1.300" stroke-linejoin="round"/><path d="M320 376l7 7M322 375l6 6" stroke="#d5dbde" stroke-width=".8"/>';

        document.getElementById('roll').innerHTML = s;
    </script>
</body>

</html>
